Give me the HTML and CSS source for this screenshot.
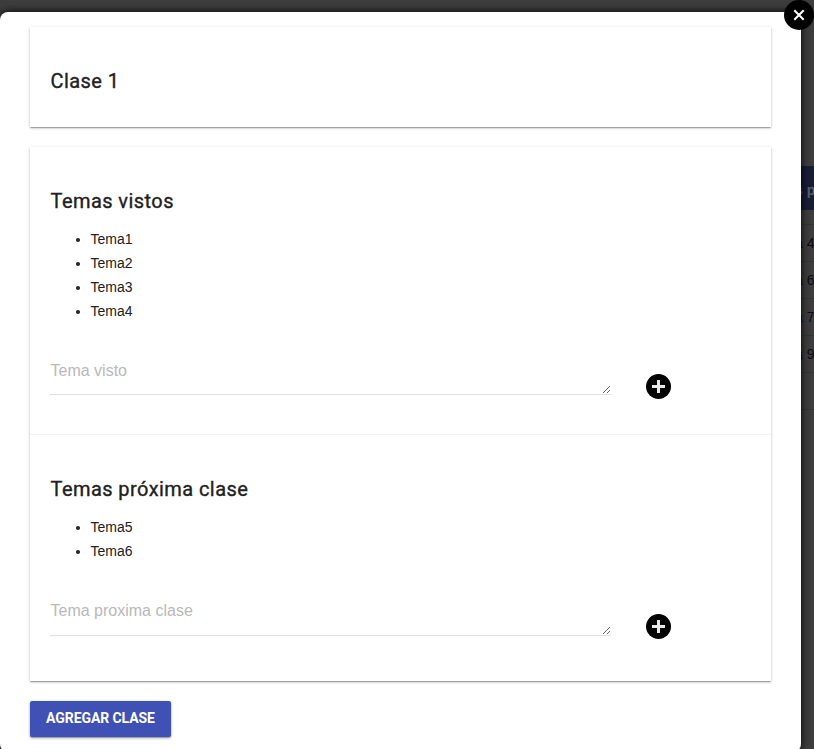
FILE: index.html
```html
<!DOCTYPE html>
<html lang="es">
<head>
<meta charset="utf-8">
<title>Clase 1</title>
<link rel="stylesheet" href="styles.css">
</head>
<body>
<div class="backdrop">
  <div class="table-head"><span>s p</span></div>
  <div class="table-gap"></div>
  <div class="table-row"><span>a 4</span></div>
  <div class="table-row"><span>a 6</span></div>
  <div class="table-row"><span>a 7</span></div>
  <div class="table-row"><span>a 9</span></div>
  <div class="table-row"></div>
  <div class="table-end"></div>
</div>
<main class="modal">
  <section class="card card-title"><h2>Clase 1</h2></section>
  <div class="card">
    <section class="topics topics-seen">
      <h2>Temas vistos</h2>
      <ul><li>Tema1</li><li>Tema2</li><li>Tema3</li><li>Tema4</li></ul>
      <div class="entry">
        <textarea placeholder="Tema visto"></textarea>
        <svg class="add" viewBox="0 0 25 25"><circle cx="12.5" cy="12.5" r="12.5"/><path d="M12.5 6v13M6 12.5h13"/></svg>
      </div>
    </section>
    <section class="topics topics-next">
      <h2>Temas próxima clase</h2>
      <ul><li>Tema5</li><li>Tema6</li></ul>
      <div class="entry">
        <textarea class="tall" placeholder="Tema proxima clase"></textarea>
        <svg class="add" viewBox="0 0 25 25"><circle cx="12.5" cy="12.5" r="12.5"/><path d="M12.5 6v13M6 12.5h13"/></svg>
      </div>
    </section>
  </div>
  <button class="submit">AGREGAR CLASE</button>
</main>
<svg class="close" viewBox="0 0 30 30"><circle cx="15" cy="15" r="15"/><path d="M10.3 10.3l9.4 9.4M19.7 10.3l-9.4 9.4"/></svg>
</body>
</html>
```
FILE: styles.css
```css
* { box-sizing: border-box; }
html, body { height: 100%; overflow: hidden; }
body {
  margin: 0;
  position: relative;
  background: #3d3d3d;
  color: #212121;
  font: 14px/24px "Liberation Sans", Arial, sans-serif;
}
.backdrop {
  position: absolute;
  top: 0;
  right: 0;
  width: 40px;
  padding-top: 166px;
  color: #0c0c0c;
  white-space: nowrap;
}
.table-head {
  height: 44px;
  padding: 12px 0 0 21px;
  background: #181d36;
  color: #5c5f6c;
  font-weight: bold;
}
.table-gap { height: 14px; }
.table-row {
  height: 37px;
  padding: 6px 0 0 21px;
  border-top: 1px solid #353535;
}
.table-end { border-top: 1px solid #353535; }
.modal {
  position: relative;
  width: 801px;
  height: 740px;
  margin-top: 12px;
  padding: 15px 30px 0;
  border-radius: 8px;
  background: #fff;
  box-shadow: 0 0 8px #000;
  float: left;
}
.card {
  width: 741px;
  margin-bottom: 20px;
  background: #fff;
  box-shadow: 0 1px 3px rgba(0,0,0,.22), 0 1px 1px rgba(0,0,0,.14), 0 2px 1px -1px rgba(0,0,0,.14);
}
.card-title { height: 100px; padding: 38px 20.5px 0; }
h2 {
  margin: 0;
  font: 400 20px/32px Roboto, sans-serif;
  letter-spacing: .43px;
  -webkit-text-stroke: .35px #212121;
}
.topics { padding: 38px 20.5px 0; }
.topics-seen { height: 287px; }
.topics-next { height: 247px; border-top: 1px solid #f2f2f2; }
ul { margin: 10px 0 0; padding: 0 0 0 40px; }
.entry { display: flex; margin-top: 32px; margin-left: -.5px; }
textarea {
  width: 561px;
  height: 40px;
  margin-right: 35px;
  padding: 4px .5px;
  border: 0;
  border-bottom: 1px solid #dfdfdf;
  outline: 0;
  background: transparent;
  font: 16px/24px "Liberation Sans", Arial, sans-serif;
}
.tall { height: 41px; }
textarea::placeholder { color: #b8b8b8; opacity: 1; }
.add { width: 25px; height: 25px; margin-top: 19px; }
.add path { stroke: #e8e8e8; stroke-width: 3; }
.submit {
  width: 141px;
  height: 36px;
  padding: 0 0 2px;
  border: 0;
  border-radius: 2px;
  background: #3f51b5;
  color: #fff;
  font: 700 14px/34px Roboto, sans-serif;
  letter-spacing: -.08px;
  box-shadow: 0 1px 3px rgba(0,0,0,.35), 0 1px 1px rgba(0,0,0,.2);
}
.close { position: absolute; top: 0; left: 784px; width: 30px; height: 30px; }
.close path { stroke: #fff; stroke-width: 2; }
```
